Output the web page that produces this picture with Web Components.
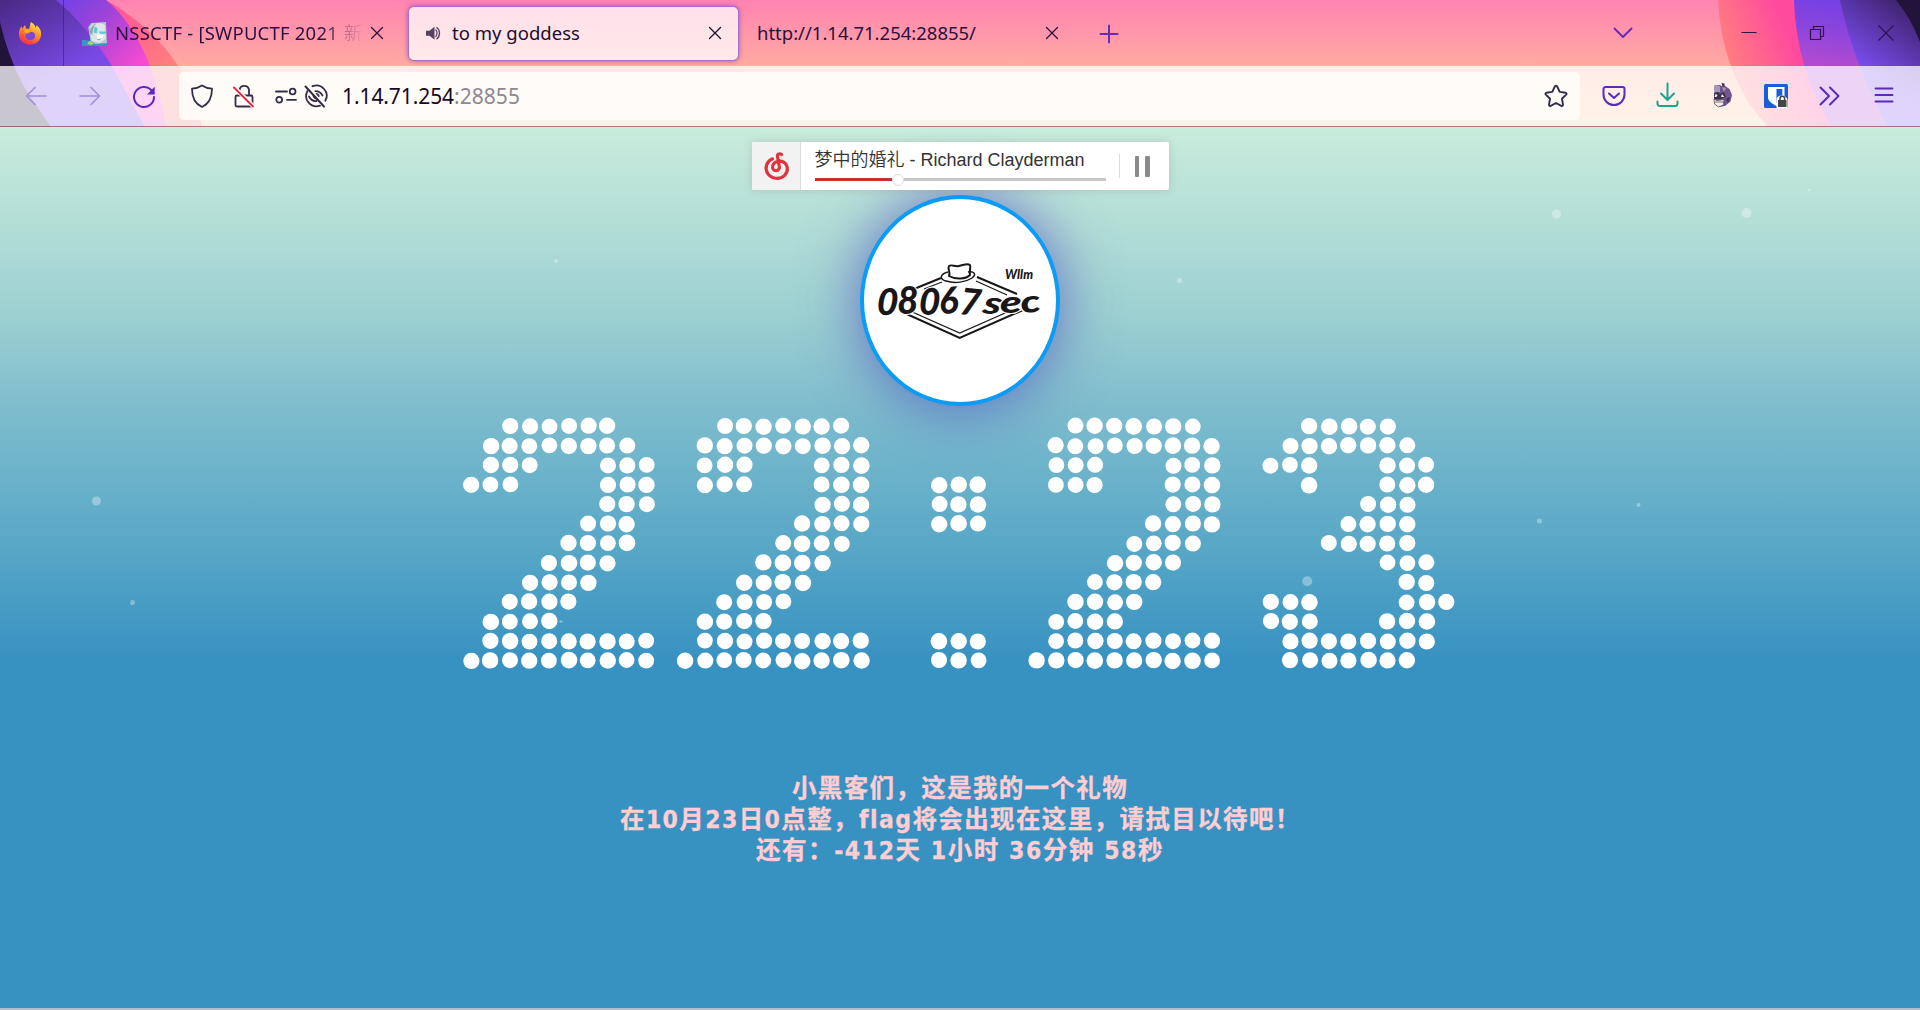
<!DOCTYPE html>
<html lang="zh-CN">
<head>
<meta charset="utf-8">
<title>to my goddess</title>
<style>
html,body{margin:0;height:100%;overflow:hidden}
body{font-family:"Noto Sans","Noto Sans CJK SC",sans-serif}
</style>
</head>
<body>
<browser-window></browser-window>
<script>
const define = (name, html, setup) => {
  const t = document.createElement('template');
  t.innerHTML = html;
  customElements.define(name, class extends HTMLElement {
    connectedCallback() {
      if (this.shadowRoot) return;
      this.attachShadow({mode: 'open'}).append(t.content.cloneNode(true));
      if (setup) setup(this, this.shadowRoot);
    }
  });
};

/* Text whose tracking is adjusted so that it spans a given width */
define('fit-text', `<style>:host{display:inline-block;white-space:pre;flex:none}span{display:inline-block}</style><span><slot></slot></span>`, (el, root) => {
  const s = root.querySelector('span');
  const w = +el.getAttribute('w');
  const d = w - s.getBoundingClientRect().width;
  s.style.letterSpacing = (d / [...el.textContent].length) + 'px';
  el.style.width = w + 'px';
});

const P = 'fill="none" stroke="currentColor" stroke-linecap="round" stroke-linejoin="round"';
const icons = {
  back: `<g ${P} stroke-width="1.6"><path d="M2.5 12H22M11 3.5 2.5 12l8.500 8.500"/></g>`,
  forward: `<g ${P} stroke-width="1.6"><path d="M2 12h19.500M13 3.500 21.500 12 13 20.500"/></g>`,
  reload: `<path ${P} stroke-width="2" d="M19.600 6.500A10 10 0 1 0 22 13"/><path fill="currentColor" d="M22.700 2.800v7.700h-7.700z"/>`,
  shield: `<path ${P} d="M12 1.500c3 2 6.300 3 10 3.200 0 8.500-2.500 14.800-10 18.300C4.500 19.500 2 13.200 2 4.700 5.700 4.500 9 3.500 12 1.500z"/>`,
  lock: `<g ${P}><path d="M7.500 8V6a4.800 4.800 0 0 1 9.500 0v4.500M5 11.500h14a1.500 1.500 0 0 1 1.500 1.500v8a1.500 1.500 0 0 1-1.500 1.500H5A1.500 1.500 0 0 1 3.500 21v-8A1.500 1.500 0 0 1 5 11.500z"/><path stroke="#fffcfa" stroke-width="4.500" stroke-linecap="butt" d="M2 3 21.500 22.500"/><path stroke="#e2253f" stroke-width="1.800" d="M2 3.500 21 22.500"/></g>`,
  perms: `<g ${P}><path d="M2 7.500h11M13 15.800h9"/><circle cx="18.600" cy="7.500" r="2.900"/><circle cx="5.200" cy="15.800" r="2.900"/></g>`,
  eye: `<g ${P}><path d="M3.500 7a10.300 10.300 0 0 0 12.500 14.700M8.500 2.200a10.300 10.300 0 0 1 12.800 14.600M5 12.500c1.500 3 4.500 4.800 7.500 4.500M11.500 7.200c3.200 0 5.600 1.600 7 4.300"/><path fill="currentColor" stroke-width="1" d="M9 10.500a3.600 3.600 0 0 0 3.800 4.500zM12.500 9.500c2 0 3 1.300 2.500 3z"/><path stroke-width="2" d="M1.500 2.500 20 22.500"/></g>`,
  star: `<path ${P} stroke-width="1.9" d="M12 1.600c.6 0 .9.4 1.200.9l2.500 5.400 5.900.8c1 .1 1.300 1.200.6 1.900l-4.300 4.100 1.100 5.900c.2 1-.8 1.700-1.700 1.200L12 19l-5.300 2.800c-.9.500-1.900-.2-1.700-1.200l1.100-5.900-4.300-4.100c-.7-.7-.4-1.800.6-1.900l5.900-.8 2.500-5.400c.3-.5.6-.9 1.200-.9z"/>`,
  pocket: `<g ${P} stroke-width="2"><path d="M3.500 3h17a2 2 0 0 1 2 2v5.500a10.500 10.500 0 0 1-21 0V5a2 2 0 0 1 2-2z"/><path d="m7 9.500 5 4.500 5-4.500"/></g>`,
  download: `<g ${P} stroke-width="2"><path d="M11.500-.500V15.500M5 9.500l6.500 6.500L18 9.500M1.500 17.500v2A2.500 2.500 0 0 0 4 22h15a2.500 2.500 0 0 0 2.500-2.500v-2"/></g>`,
  mole: `<path fill="#72558f" d="M4.500 1.500 10 1l1.500 1 3-.500 5 3.500 2.500 6-1.500 6.500-5.500 4.500L9 23l-4.500-3z"/><path fill="#a796b8" d="M4 2h6v6H4zM12 3l4 1-2 4z"/><path fill="#3d304e" d="m11.500-1 3 .5v3h-2zM4 9l4-1 2 2 4-2 2 5-5 2H4zM16 15l4-2-2 6z"/><path fill="#f4ece6" d="m5.500 10 2 1-1 2h-2zM12 10l2.500 3H11zM4 15l3 1.500 7-1-.5 5.500-5 2-4-3z"/><path fill="none" stroke="#4e3e48" stroke-width=".7" d="M4 15l3 1.500 7-1-.5 5.500-5 2-4-3zM5 18l9 0"/>`,
  bitwarden: `<rect width="24" height="24" rx="1.500" fill="#175ddc"/><path fill="#fff" d="M4 3h16.500v10c0 4-3.500 6.500-8.200 9C7.500 19.500 4 17 4 13z"/><path fill="#175ddc" d="M12.500 5h5.800v8c0 2-2 4-5.800 6z"/><path fill="#fff" d="M12.500 16c0-6 10-6 11 0v8h-11z"/><path fill="#454545" d="M14 16h8.500v7H14z"/><path fill="none" stroke="#454545" stroke-width="1.600" d="M16 16v-1.500a2.300 2.300 0 0 1 4.600 0V16"/>`,
  more: `<g ${P} stroke-width="2"><path d="m2.500 3.500 8.500 8.500-8.500 8.500M12 3.500l8.500 8.500-8.500 8.500"/></g>`,
  menu: `<g ${P} stroke-width="1.900"><path d="M3.500 4.500h17M3.500 11h17M3.500 17.500h17"/></g>`,
  close: `<path ${P} stroke-width="1.300" d="m6.500 6.500 11 11M17.500 6.500l-11 11"/>`,
  plus: `<path ${P} stroke-width="2" d="M12 3.500v17M3.500 12h17"/>`,
  chevron: `<path ${P} stroke-width="2" d="m3.500 7.500 8.500 8.500L20.500 7.500"/>`,
  min: `<path fill="none" stroke="currentColor" stroke-width="1" d="M3.500 11.500h15"/>`,
  restore: `<path fill="none" stroke="currentColor" stroke-width="1.200" d="M4.500 8.500h10v10h-10zM7.500 8V5.500h10v10H15"/>`,
  winclose: `<path fill="none" stroke="currentColor" stroke-width="1.200" d="m4.500 4.500 15 15M19.500 4.500l-15 15"/>`,
  speaker: `<path fill="currentColor" d="M4 9.700h3.500l5-4v13l-5-4H4z"/><path fill="none" stroke="currentColor" stroke-width="1.300" d="M13.500 8.500c2 1.500 2 5.500 0 7.500M14.500 6.200c4 2.500 4 9.500 0 12"/>`,
  firefox: `<defs><linearGradient id="f" x1=".8" y1="0" x2=".3" y2="1"><stop stop-color="#fff04a"/><stop offset=".45" stop-color="#ff9422"/><stop offset="1" stop-color="#f52454"/></linearGradient></defs><path fill="url(#f)" d="M12.800 1c3 1.500 4.200 3.500 4.700 5.500 1-.5 1-1.500.8-2.500 3.700 2.800 5.200 6 4.800 10-.6 5.800-5.400 9.800-11.200 9.800C5.500 23.800.8 19 .8 13c0-3 1-6 3-8l.2 3 3-4 1 3.500 3 .5c1-2 1-4 1.800-7z"/><path fill="#7649d8" d="M8 12.500c2.500.7 4-.4 4-1.500 3.500-.5 6 1.700 5 5-1 3.500-7 4.500-9 .7-.9-1.600-.8-3 0-4.200z"/><path fill="#ffab2d" d="M7 8.500c2 0 4 .5 5.500 1.800-2 .4-2.300 2-4.500 2.200C6.500 11 6 9.700 7 8.500z"/>`,
  favicon: `<path fill="#a9cdd8" d="M6 6 9 2l14-1 1 22-15 1z"/><path fill="#dce6e4" d="M8 5c4-4 10-4 14-1l1 13-6 4-8-2z"/><path fill="#67c9d3" d="M12 6c4-1 3 4 2 6l-3-1zM16 10h7v2l-5 1z"/><path fill="#fff" d="M14 13h7l-2 5-4 0z"/><path fill="#89a7b2" d="M7 10c3-6 5-7 7-8-3 3-4 7-4 12zM14 17c2 1 4 0 5-1-1 3-4 3-5 1z"/><path fill="#3696c8" d="m0 18 8 1 5 3 11-1v3H0z"/><path fill="#a6d46c" d="m7 19 5 2-3 2-4-1z"/>`,
  netease: `<g fill="none" stroke="#e0333c" stroke-width="2.700" stroke-linecap="round"><path d="M16.800 2.200c-2-1.500-4-.2-3.500 2l1.500 7.800a3 3 0 1 1-5.700.2C9.600 8.900 13 7.300 17 8c5.600 2.200 6 8.500 2.400 12-4.200 4-11.500 3.200-14.600-1.600C2 13.500 4 7.800 9 5.800"/></g>`
};
define('ui-icon', `<style>:host{display:flex;flex:none;justify-content:center;align-items:center;width:var(--box,24px)}svg{width:var(--size,24px);height:var(--size,24px);overflow:visible;display:block}</style><svg viewBox="0 0 24 24" stroke-width="1.8"></svg>`,
  (el, root) => { root.querySelector('svg').innerHTML = icons[el.getAttribute('name')]; });

define('theme-art', `<style>:host{display:block}svg{display:block}</style>
<svg width="1920" height="127" viewBox="0 0 1920 127">
<defs>
<linearGradient id="bg" x1="0" y1="0" x2="0" y2="1"><stop stop-color="#ff83b2"/><stop offset=".5" stop-color="#ffa9a2"/><stop offset=".57" stop-color="#ffb3a0"/><stop offset="1" stop-color="#ffcb9f"/></linearGradient>
<linearGradient id="p1" gradientUnits="userSpaceOnUse" x1="10" y1="0" x2="55" y2="80"><stop stop-color="#4b2a8a"/><stop offset="1" stop-color="#7a49e6"/></linearGradient>
<linearGradient id="m1" gradientUnits="userSpaceOnUse" x1="70" y1="0" x2="140" y2="66"><stop stop-color="#7742e4"/><stop offset=".35" stop-color="#9b43d8"/><stop offset="1" stop-color="#f84bd0"/></linearGradient>
<linearGradient id="o1" gradientUnits="userSpaceOnUse" x1="110" y1="0" x2="170" y2="66"><stop stop-color="#ff4f9c"/><stop offset="1" stop-color="#ff7f7c"/></linearGradient>
<linearGradient id="o2" gradientUnits="userSpaceOnUse" x1="1725" y1="50" x2="1785" y2="25"><stop stop-color="#ff7d80"/><stop offset="1" stop-color="#ff4a9e"/></linearGradient>
<linearGradient id="p2" gradientUnits="userSpaceOnUse" x1="1835" y1="0" x2="1825" y2="66"><stop stop-color="#7540e4"/><stop offset=".45" stop-color="#8b45dc"/><stop offset="1" stop-color="#b44bd0"/></linearGradient>
<linearGradient id="p3" gradientUnits="userSpaceOnUse" x1="1905" y1="5" x2="1860" y2="66"><stop stop-color="#40236e"/><stop offset="1" stop-color="#794df0"/></linearGradient>
</defs>
<rect width="1920" height="127" fill="url(#bg)"/>
<path fill="url(#o1)" d="M0 0H106Q188 48 202 127H0z"/>
<path fill="url(#m1)" d="M0 0H106Q150 36 166 127H0z"/>
<path fill="url(#p1)" d="M0 0H56Q85 24 112 66L145 127H0z"/>
<path fill="#21133a" d="M0 22Q7 54 24 87L51 127H0z"/>
<path fill="url(#o2)" d="M1718 0Q1722 78 1768 127H1920V0z"/>
<path fill="url(#p2)" d="M1794 0Q1796 70 1832 127H1920V0z"/>
<path fill="url(#p3)" d="M1840 0Q1852 60 1888 127H1920V0z"/>
<path fill="#21133a" d="M1896 0Q1911 18 1920 42V0z"/>
</svg>`);

define('browser-tab', `<style>
:host{display:flex;box-sizing:border-box;align-items:center;width:329px;height:53px;font-size:18.500px;color:#2a1040;flex:none;padding:0 11px 0 19px;border-radius:5px}
:host([active]){background:linear-gradient(#ffdfec,#ffeae6);box-shadow:0 0 0 1px #a66fd4,0 0 5px 1px rgba(110,50,150,.6);color:#1b0b30}
.label{flex:1;overflow:hidden;display:flex;align-items:center;padding-bottom:2px}
:host([fade]) .label{-webkit-mask:linear-gradient(90deg,#000 calc(100% - 45px),transparent);mask:linear-gradient(90deg,#000 calc(100% - 45px),transparent)}
</style><slot name="icon"></slot><div class="label"><slot></slot></div><ui-icon name="close"></ui-icon>`);

define('tab-strip', `<style>
:host{display:flex;height:66px;align-items:center}
.home{width:64px;height:66px;display:flex;align-items:center;padding-left:18px;box-sizing:border-box;border-right:1px solid rgba(50,20,100,.5)}
.t1{padding-left:18px;width:336px}.t2{margin-left:9px;padding-left:13px}
.t3{margin-left:0;width:337px}
.sp{flex:1}
ui-icon{color:#6a2bb8}.win{color:#33104a;--box:68px;--size:24px}
</style>
<div class="home"><ui-icon name="firefox"></ui-icon></div>
<browser-tab class="t1" fade><ui-icon slot="icon" name="favicon" style="margin-right:8px;--size:25px;--box:25px"></ui-icon><fit-text w="223">NSSCTF - [SWPUCTF 2021</fit-text><span style="margin-left:6px;white-space:nowrap;font-weight:300">新生赛</span></browser-tab>
<browser-tab class="t2" active><ui-icon slot="icon" name="speaker" style="margin-right:6px;color:#574160"></ui-icon><fit-text w="128">to my goddess</fit-text></browser-tab>
<browser-tab class="t3"><fit-text w="219">http://1.14.71.254:28855/</fit-text></browser-tab>
<ui-icon name="plus" style="margin-left:22px;margin-top:1px"></ui-icon>
<span class="sp"></span>
<ui-icon name="chevron" style="margin-right:81px"></ui-icon>
<ui-icon class="win" name="min"></ui-icon><ui-icon class="win" name="restore"></ui-icon><ui-icon class="win" name="winclose"></ui-icon>`);

define('nav-bar', `<style>
:host{display:flex;box-sizing:border-box;height:61px;align-items:center;background:rgba(255,255,255,.76);border-bottom:1px solid rgba(120,45,40,.6);padding-left:9px;--box:54px}
.b{color:#5b2ab8}.dim{color:#a58ddd}
.url{display:flex;box-sizing:border-box;align-items:center;width:1401px;height:48px;margin:0 7px 0 8px;padding-left:11px;border-radius:5px;background:rgba(255,253,249,.9);color:#382a49;font-size:21px;--box:24px}
.host{margin-left:14px;color:#15081f}.port{color:#8e8893}.g{margin-left:18px}
.star{margin-left:auto;margin-right:12px}
</style>
<ui-icon class="b dim" name="back"></ui-icon><ui-icon class="b dim" name="forward"></ui-icon><ui-icon class="b" name="reload"></ui-icon>
<div class="url"><ui-icon name="shield"></ui-icon><ui-icon class="g" name="lock"></ui-icon><ui-icon class="g" name="perms"></ui-icon><ui-icon style="margin-left:6px" name="eye"></ui-icon>
<fit-text class="host" w="112">1.14.71.254</fit-text><fit-text class="port" w="66">:28855</fit-text>
<ui-icon class="star" name="star"></ui-icon></div>
<ui-icon class="b" name="pocket"></ui-icon><ui-icon name="download" style="color:#1aa58c"></ui-icon><ui-icon name="mole"></ui-icon><ui-icon name="bitwarden"></ui-icon><ui-icon class="b" name="more"></ui-icon><ui-icon class="b" name="menu"></ui-icon>`);

define('browser-chrome', `<style>:host{display:block;position:relative;height:127px;flex:none}theme-art{position:absolute;left:0;top:0}.in{position:relative}</style>
<theme-art></theme-art><div class="in"><tab-strip></tab-strip><nav-bar></nav-bar></div>`);

define('music-player', `<style>
:host{display:flex;width:417px;height:48px;background:#fff;border-radius:2px;overflow:visible;box-shadow:0 0 8px rgba(120,110,110,.25);font-family:"Liberation Sans","Noto Sans CJK SC",sans-serif;color:#333;position:relative;z-index:1}
.cover{width:48px;background:#f2f2f2;border-right:1px solid #ddd;border-radius:2px 0 0 2px;display:flex;align-items:center;justify-content:center}
.mid{width:291px;margin-left:14px;display:flex;flex-direction:column}
.title{font-size:18px;line-height:24px;height:24px;margin-top:6px;display:flex}
.zh{font-weight:350}
.bar{height:3px;margin-top:6px;background:#c6c6c6;display:flex;align-items:center}
.done{width:77px;height:3px;background:#c62f2f}.knob{width:10px;height:10px;border-radius:50%;background:#fff;border:1px solid #ddd;flex:none}
.ctl{margin-left:13px;display:flex;align-items:center;width:50px;gap:6px}
.ctl i{width:4.500px;height:21px;background:#8a8a8a;border-radius:1px}
.ctl b{width:1px;height:24px;background:#ddd;margin-right:9px}
</style>
<div class="cover"><ui-icon name="netease" style="--size:28px"></ui-icon></div>
<div class="mid"><div class="title"><fit-text class="zh" w="90">梦中的婚礼</fit-text><fit-text w="180"> - Richard Clayderman</fit-text></div><div class="bar"><div class="done"></div><div class="knob"></div></div></div>
<div class="ctl"><b></b><i></i><i></i></div>`);

define('team-avatar', `<style>
:host{display:flex;box-sizing:border-box;width:200px;height:211px;border-radius:50%;border:4px solid #0c9bf5;background:#fff;box-shadow:0 0 60px rgba(76,72,190,.75);align-items:center;justify-content:center}
svg{display:block;overflow:visible}
</style>
<svg width="192" height="203" viewBox="0 0 192 203">
<g fill="none" stroke="#1b1719" stroke-width="2">
<path d="M50 90 77 79M113 78l40 17M36 112l59.700 27L159 111"/><path stroke-width="1.200" d="M60 90 78 83M112 82l31 14M46 112l49.700 22L148 111"/>
<path stroke-width="1.500" d="M84 73c-8 2-9 7-2 9 9 3 20 1 26-3 5-4 2-7-4-6"/><path stroke-width="2" stroke-linejoin="round" d="M85 77c2-4-2-7 0-10 2-2 6 1 10 0 5-1 8-3 11-1 1 3-1 7 0 10-4 4-14 5-21 1z"/>
</g>
<g font-family="Lato" font-style="italic" font-weight="900" fill="#1b1719" stroke="#fff" stroke-width="2" paint-order="stroke">
<text x="12" y="115" font-size="37" textLength="104" lengthAdjust="spacingAndGlyphs" rotate="5 0 4 -3 6">08067</text>
<text x="118" y="114" font-size="31" textLength="60" lengthAdjust="spacingAndGlyphs" rotate="8 0 -6">sec</text>
<text x="141" y="80" font-size="13" textLength="28" lengthAdjust="spacingAndGlyphs" stroke="none">Wllm</text></g>
</svg>`);

define('dot-clock', `<style>:host{display:block}svg{display:block}</style><svg width="1030" height="260" viewBox="445 410 1030 260" fill="#fff"></svg>`, (el, root) => {
  const two = [[2,8],[1,9],[1,3,7,9],[1,3,7,9],[7,9],[6,9],[5,8],[4,7],[3,6],[2,5],[1,4],[1,9],[0,9]];
  const first = [[2,7],[1,8],[1,3,7,9],[0,2,7,9],[7,9],[6,8],[5,8],[4,7],[3,6],[2,5],[1,4],[1,9],[0,9]];
  const three = [[2,6],[1,7],[0,2,6,8],[2,2,6,8],[5,7],[4,7],[3,7],[6,8],[7,8],[0,2,7,9],[0,2,6,8],[1,8],[1,7]];
  const colon = [[],[],[],[0,2],[0,2],[0,2],[],[],[],[],[],[0,2],[0,2]];
  let out = '', n = 7;
  const rnd = () => (n = (n * 1103515245 + 12345) % 2147483648) / 2147483648 - .5;
  [[first,0],[two,11],[colon,24],[two,29],[three,41]].forEach(([g, c0]) => g.forEach((runs, r) => {
    for (let i = 0; i < runs.length; i += 2)
      for (let c = runs[i]; c <= runs[i + 1]; c++)
        out += `<circle cx="${(471.1 + (c0 + c) * 19.5 + rnd() * 1.1).toFixed(1)}" cy="${(426.2 + r * 19.53 + rnd() * 1.2).toFixed(1)}" r="${(8.1 + rnd() * .4).toFixed(1)}"/>`;
  }));
  root.querySelector('svg').innerHTML = out;
});

define('gift-message', `<style>
:host{display:flex;flex-direction:column;align-items:center;font:bold 24px/31px "DejaVu Sans Condensed","DejaVu Sans","Noto Sans CJK SC",sans-serif;font-stretch:condensed;font-size:24.500px;color:#ffcdd2;-webkit-text-stroke:.3px #ffcdd2}
div{display:flex;height:31px}
</style>
<div><fit-text w="336">小黑客们，这是我的一个礼物</fit-text></div>
<div><fit-text w="680">在10月23日0点整，flag将会出现在这里，请拭目以待吧！</fit-text></div>
<div><fit-text w="408">还有：-412天 1小时 36分钟 58秒</fit-text></div>`);

define('page-stage', `<style>
:host{display:flex;flex-direction:column;align-items:center;box-sizing:border-box;height:881px;padding-top:15px;position:relative;overflow:hidden;
background:linear-gradient(#c9ecdc 0,#b4dfd7 90px,#9cd0d1 190px,#7ebdcd 280px,#59a8c7 415px,#3892c1 532px,#3892c1 100%)}
.sky{position:absolute;left:0;top:0;fill:rgba(255,255,255,.33)}
team-avatar{margin-top:5px}dot-clock{margin-top:4px;position:relative}
gift-message{margin-top:103px;position:relative}
</style>
<svg class="sky" width="1920" height="881" viewBox="0 127 1920 881"><circle cx="1556.500" cy="214" r="4.500"/><circle cx="1746.500" cy="213" r="5"/><circle cx="1809" cy="190" r="1.200"/><circle cx="556" cy="261" r="2"/><circle cx="1179.500" cy="280.500" r="2.500"/><circle cx="96.500" cy="501" r="4.500"/><circle cx="1539.500" cy="521" r="2.500"/><circle cx="1638.500" cy="505" r="2"/><circle cx="132.500" cy="602.500" r="2.500"/><circle cx="1307.300" cy="581.300" r="5"/><circle cx="561" cy="621.500" r="1.600"/></svg>
<music-player></music-player><team-avatar></team-avatar><dot-clock></dot-clock><gift-message></gift-message>`);

define('browser-window', `<style>:host{display:flex;flex-direction:column;width:1920px;height:1010px;background:#b0bccb;overflow:hidden}</style><browser-chrome></browser-chrome><page-stage></page-stage>`);
</script>
</body>
</html>
